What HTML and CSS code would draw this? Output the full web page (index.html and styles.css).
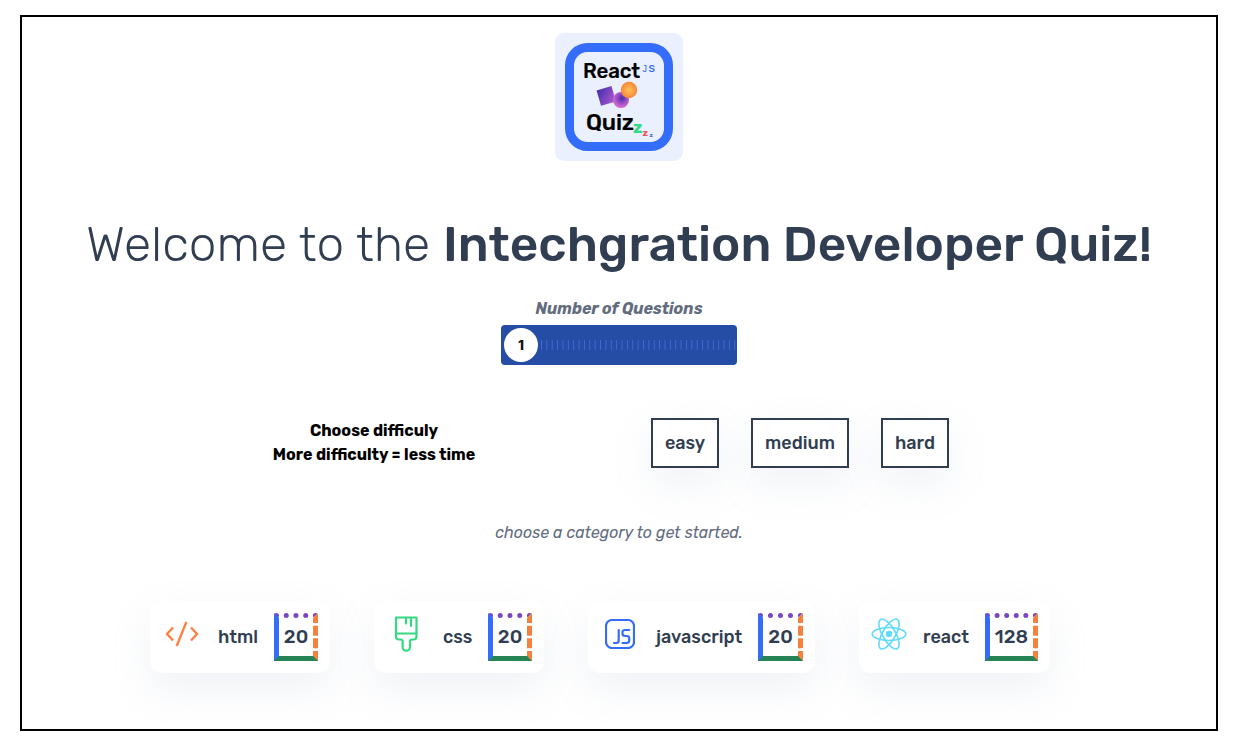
FILE: index.html
```html
<!DOCTYPE html>
<html lang="en">
<head>
<meta charset="utf-8">
<title>Intechgration Developer Quiz</title>
<link rel="stylesheet" href="styles.css">
</head>
<body>
<main class="frame">
  <svg class="logo" viewBox="0 0 128 128">
    <defs>
      <linearGradient id="sq" x1="0" y1="0" x2="1" y2="1"><stop offset="0" stop-color="#452cab"/><stop offset="1" stop-color="#b05cd0"/></linearGradient>
      <radialGradient id="pk" cx=".55" cy=".4"><stop offset="0" stop-color="#4b2bac"/><stop offset="1" stop-color="#c964d2"/></radialGradient>
      <radialGradient id="or"><stop offset="0" stop-color="#fbc35a"/><stop offset="1" stop-color="#f98536"/></radialGradient>
    </defs>
    <rect width="128" height="128" rx="9" fill="#ebf0ff"/>
    <rect x="14.500" y="14.500" width="99" height="99" rx="18" fill="none" stroke="#356dfb" stroke-width="9"/>
    <text class="logo-word" x="28" y="45" textLength="57">React</text>
    <text class="logo-j" x="86.500" y="39">J</text>
    <text class="logo-s" x="93.500" y="39">S</text>
    <rect x="43.500" y="55" width="15.500" height="16" fill="url(#sq)" transform="rotate(-16 51 63)"/>
    <circle cx="66" cy="67" r="8" fill="url(#pk)"/>
    <circle cx="74" cy="57" r="8.200" fill="url(#or)"/>
    <text class="logo-quiz" x="31" y="97" textLength="48">Quiz</text>
    <text class="logo-z z1" x="78" y="100">z</text>
    <text class="logo-z z2" x="87.500" y="103">z</text>
    <text class="logo-z z3" x="94.500" y="103.500">z</text>
  </svg>
  <h1 class="title">Welcome to the <span class="strong">Intechgration Developer Quiz!</span></h1>
  <p class="count-label">Number of Questions</p>
  <div class="slider">
    <span class="thumb">1</span>
    <svg class="ticks" width="196" height="10" shape-rendering="crispEdges">
      <defs><pattern id="tick" width="5.370" height="10" patternUnits="userSpaceOnUse"><rect width="1" height="10" fill="#3f6ad6"/></pattern></defs>
      <rect width="196" height="10" fill="url(#tick)"/>
    </svg>
  </div>
  <section class="difficulty">
    <div class="hint"><p>Choose difficuly</p><p>More difficulty = less time</p></div>
    <div class="levels">
      <button class="level easy">easy</button>
      <button class="level medium">medium</button>
      <button class="level hard">hard</button>
    </div>
  </section>
  <p class="prompt">choose a category to get started.</p>
  <section class="cards">
    <article class="card html">
      <svg class="icon" width="34" height="36" viewBox="0 0 34 36" fill="none" stroke="#ff7e3d" stroke-width="2.300">
        <path d="M8 11.500 2 18l6 6.500M26 11.500 32 18l-6 6.500M21.300 6 11.700 30"/>
      </svg>
      <span class="name">html</span><span class="badge">20</span>
    </article>
    <article class="card css">
      <svg class="icon" width="24" height="36" viewBox="0 0 24 36" fill="none" stroke="#35d982" stroke-width="2.200" stroke-linejoin="round" stroke-linecap="round">
        <path d="M2 1.500h20.500v19q0 3-3 3H18q-2 0-2 2v5.500a3.700 3.700 0 0 1-7.400 0v-5.500q0-2-2-2H5q-3 0-3-3zM2 17.500h20.500M12 2v5.500M17 2v8"/>
      </svg>
      <span class="name">css</span><span class="badge">20</span>
    </article>
    <article class="card javascript">
      <svg class="icon" width="30" height="30" viewBox="0 0 30 30" fill="none" stroke="#356dfb" stroke-width="2.200" stroke-linecap="round" stroke-linejoin="round">
        <rect x="1" y="1" width="28" height="28" rx="6"/>
        <path d="M13.700 11v10.500q0 2.500-2.200 2.500H9M24.200 11h-4q-2.700 0-2.700 2v1.800q0 2.200 2.700 2.200h1.300q2.700 0 2.700 2.200v2.300q0 2.500-2.700 2.500h-4"/>
      </svg>
      <span class="name">javascript</span><span class="badge">20</span>
    </article>
    <article class="card react">
      <svg class="icon" width="36" height="32" viewBox="-18 -16 36 32" fill="none" stroke="#61dafb" stroke-width="1.600">
        <circle r="3.200" fill="#61dafb" stroke="none"/>
        <ellipse rx="16.800" ry="6.500"/>
        <ellipse rx="16.800" ry="6.500" transform="rotate(60)"/>
        <ellipse rx="16.800" ry="6.500" transform="rotate(120)"/>
      </svg>
      <span class="name">react</span><span class="badge">128</span>
    </article>
  </section>
</main>
</body>
</html>
```
FILE: styles.css
```css
* { box-sizing: border-box; }
body { margin: 0; background: #fff; font-family: Rubik, Roboto, sans-serif; overflow: hidden; }
p, h1 { margin: 0; white-space: nowrap; }
.frame { width: 1198px; height: 716px; margin: 15px 0 0 20px; border: 2px solid #000; padding-top: 16px; display: flex; flex-direction: column; align-items: center; }
.logo { display: block; width: 128px; height: 128px; flex: none; }
.logo-word, .logo-quiz { font-weight: 500; font-size: 20.5px; fill: #000; stroke: #000; stroke-width: .2; }
.logo-quiz { font-size: 23px; }
.logo-j { font: 10px "Liberation Mono", monospace; fill: #356dfb; }
.logo-s { font-weight: 500; font-size: 10px; fill: #356dfb; }
.logo-z { font-weight: 700; }
.z1 { font-size: 17px; fill: #35d982; }
.z2 { font-size: 10px; fill: #ee5454; }
.z3 { font-size: 6px; fill: #356dfb; }
.title { height: 60px; margin-top: 53px; color: #313e51; font-size: 49.6px; font-weight: 300; line-height: 60px; }
.strong { font-weight: 500; }
.count-label { margin-top: 25px; height: 20px; line-height: 20px; font-size: 16px; font-weight: 700; font-style: italic; color: #626c7f; }
.slider { width: 236px; height: 40px; margin-top: 6px; padding-left: 3px; border-radius: 4px; background: #264da5; display: flex; align-items: center; gap: 3px; flex: none; overflow: hidden; }
.thumb { width: 34px; height: 34px; flex: none; border-radius: 50%; background: #fff; color: #111; font: 800 13.5px/35px Inter, sans-serif; text-align: center; }
.ticks { flex: none; }
.difficulty { width: 100%; height: 50px; margin-top: 53px; display: flex; flex: none; }
.hint { width: 704px; margin-right: -75px; padding-top: 1px; text-align: center; font-size: 16px; font-weight: 700; line-height: 24px; color: #000; }
.levels { display: flex; gap: 32px; }
.level { width: 68px; height: 50px; padding: 0; border: 2px solid #313e51; background: #fff; box-shadow: 0 16px 40px rgba(143, 160, 193, .14); color: #313e51; font: 500 18px Rubik, Roboto, sans-serif; }
.medium { width: 98px; }
.prompt { margin-top: 53px; height: 24px; line-height: 24px; font-size: 16px; font-style: italic; color: #626c7f; }
.cards { width: 900px; height: 72px; margin-top: 56px; margin-right: 38px; display: flex; gap: 44px; flex: none; }
.card { height: 72px; padding-right: 12px; border-radius: 12px; background: #fff; box-shadow: 0 16px 40px rgba(143, 160, 193, .14); display: flex; align-items: center; flex: none; }
.card.html { width: 180px; padding-left: 15px; }
.card.css { width: 170px; padding-left: 20px; }
.card.javascript { width: 227px; padding-left: 17px; }
.card.react { width: 191px; padding-left: 12px; }
.icon { display: block; flex: none; margin-bottom: 6px; }
.name { margin-left: 19px; color: #313e51; font-size: 18px; font-weight: 500; }
.css .name { margin-left: 25px; }
.javascript .name { margin-left: 21px; }
.react .name { margin-left: 16px; }
.badge { width: 44px; height: 48px; margin-left: auto; border: 5px solid; border-color: #7a48bd #f5813f #268355 #356dfb; border-style: dotted dashed solid solid; color: #313e51; font-size: 19.2px; font-weight: 500; line-height: 38px; text-align: center; }
.javascript .badge { width: 45px; }
.react .badge { width: 53px; }
```
